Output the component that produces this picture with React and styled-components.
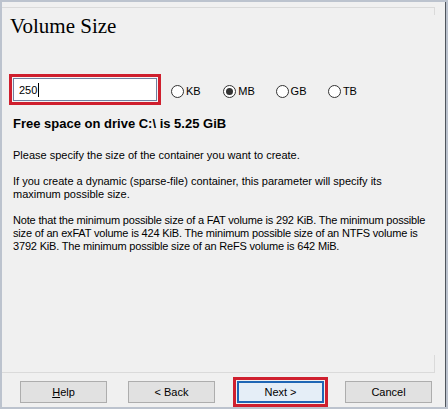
import React from "react";
import styled, { createGlobalStyle } from "styled-components";

const Global = createGlobalStyle`
  html, body { margin: 0; padding: 0; }
  body { background: #bcc3ce; font-family: "Liberation Sans", Arial, sans-serif; }
  * { box-sizing: border-box; }
`;

const Frame = styled.div`
  width: 448px;
  height: 409px;
  padding: 2px;
  background: #bcc3ce;
`;

const Panel = styled.div`
  height: 405px;
  background: #f0f0f0;
  border-right: 1px solid #4f555c;
  display: flex;
  flex-direction: column;
`;

const Header = styled.div`
  position: relative;
  margin-top: 5px;
  margin-right: 10px;
  border-top: 1px solid #dadada;
  &::after {
    content: "";
    position: absolute;
    right: 0;
    top: 0;
    width: 1px;
    height: 7px;
    background: #dadada;
  }
`;

const Title = styled.h1`
  margin: 6px 0 0 8px;
  font-family: "Liberation Serif", "Times New Roman", serif;
  font-weight: normal;
  font-size: 21px;
  line-height: 24px;
  color: #000;
`;

const SizeRow = styled.div`
  display: flex;
  align-items: center;
  margin: 36px 0 0 7px;
  height: 31px;
`;

const Highlight = styled.div`
  border: 3px solid #cf1f2e;
  padding: 1px;
  background: #f4f4f4;
`;

const Input = styled.div`
  width: 144px;
  height: 23px;
  border: 1px solid #6f80a0;
  background: #fff;
  display: flex;
  align-items: center;
  padding-left: 5px;
  font-size: 11px;
  color: #000;
`;

const Caret = styled.span`
  display: inline-block;
  width: 1px;
  height: 14px;
  background: #000;
  margin-left: 1px;
`;

const Units = styled.div`
  display: flex;
  margin-left: 10px;
  margin-top: 3px;
`;

const Unit = styled.label`
  width: 52.3px;
  display: flex;
  align-items: center;
  font-size: 11px;
  color: #000;
`;

const Radio = styled.span`
  width: 13px;
  height: 13px;
  border-radius: 50%;
  border: 1px solid #333;
  background: #fff;
  display: flex;
  align-items: center;
  justify-content: center;
  margin-right: 2px;
  &::before {
    content: "";
    width: 7px;
    height: 7px;
    border-radius: 50%;
    background: ${(p) => (p.$checked ? "#333" : "transparent")};
  }
`;

const Info = styled.div`
  padding: 0 8px 0 11px;
  color: #000;
`;

const FreeSpace = styled.div`
  margin-top: 11px;
  font-weight: bold;
  font-size: 13px;
  line-height: 16px;
`;

const Para = styled.p`
  margin: ${(p) => (p.$first ? "17px" : "13px")} 0 0 0;
  font-size: 11px;
  line-height: 13px;
  white-space: nowrap;
  letter-spacing: ${(p) => (p.$tight ? "-0.18px" : "0")};
`;

const Spacer = styled.div`
  flex: 1;
`;

const BottomRule = styled.div`
  height: 18px;
  margin-right: 10px;
  border-bottom: 1px solid #dadada;
  border-right: 1px solid #dadada;
`;

const Buttons = styled.div`
  display: flex;
  gap: 21px;
  padding: 8px 0 4px 18px;
`;

const Button = styled.button`
  width: 87px;
  height: 22px;
  padding: 0;
  font-family: "Liberation Sans", Arial, sans-serif;
  font-size: 11px;
  color: #000;
  background: ${(p) => (p.$primary ? "#e5eef7" : "#e1e1e1")};
  border: 1px solid ${(p) => (p.$primary ? "#1f66b5" : "#adadad")};
  box-shadow: ${(p) => (p.$primary ? "inset 0 0 0 1px #1f66b5" : "none")};
  outline: ${(p) => (p.$highlight ? "3px solid #cf1f2e" : "none")};
  outline-offset: 1px;
  margin-left: ${(p) => (p.$primary ? "1px" : "0")};
  u { text-decoration: underline; }
`;

export default function App() {
  const units = ["KB", "MB", "GB", "TB"];
  return (
    <>
      <Global />
      <Frame>
        <Panel>
          <Header>
            <Title>Volume Size</Title>
          </Header>
          <SizeRow>
            <Highlight>
              <Input>
                250<Caret />
              </Input>
            </Highlight>
            <Units>
              {units.map((u) => (
                <Unit key={u}>
                  <Radio $checked={u === "MB"} />
                  {u}
                </Unit>
              ))}
            </Units>
          </SizeRow>
          <Info>
            <FreeSpace>Free space on drive C:\ is 5.25 GiB</FreeSpace>
            <Para $first>Please specify the size of the container you want to create.</Para>
            <Para>
              If you create a dynamic (sparse-file) container, this parameter will specify its
              <br />
              maximum possible size.
            </Para>
            <Para $tight>
              Note that the minimum possible size of a FAT volume is 292 KiB. The minimum possible
              <br />
              size of an exFAT volume is 424 KiB. The minimum possible size of an NTFS volume is
              <br />
              3792 KiB. The minimum possible size of an ReFS volume is 642 MiB.
            </Para>
          </Info>
          <Spacer />
          <BottomRule />
          <Buttons>
            <Button>
              <u>H</u>elp
            </Button>
            <Button>&lt; Back</Button>
            <Button $primary $highlight>
              Next &gt;
            </Button>
            <Button>Cancel</Button>
          </Buttons>
        </Panel>
      </Frame>
    </>
  );
}
